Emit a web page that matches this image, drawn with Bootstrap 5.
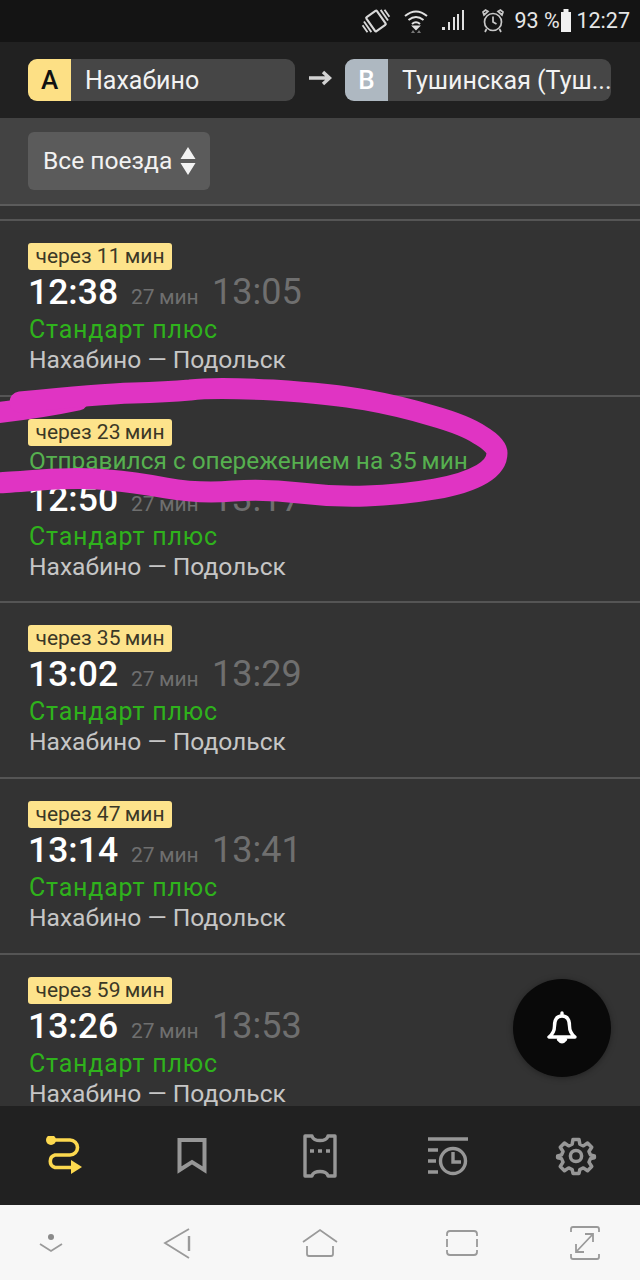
<!DOCTYPE html>
<html lang="ru"><head><meta charset="utf-8"><title>Расписание</title>
<link href="https://cdn.jsdelivr.net/npm/bootstrap@5.3.0/dist/css/bootstrap.min.css" rel="stylesheet">
<style>
html,body{height:100%;margin:0}
body{font-family:Roboto,"Noto Sans",sans-serif;background:#333;width:640px;height:1280px;overflow:hidden;position:relative}
.phone-status{height:42px;background:#141414;color:#e6e6e6;font-size:21.5px;padding-right:10px;flex:none}
.phone-status svg{display:block}
.route-head{height:76px;background:#212121;flex:none;padding:17px 29px 17px 28px}
.stop{height:42px;background:#464646;border-radius:9px;overflow:hidden;color:#f2f2f2;font-size:25px;line-height:44px;min-width:0}
.stop-a{width:267px}.stop-b{width:266px}
.stop-letter{width:43px;height:42px;flex:none;font-size:26px;font-weight:500;line-height:42px;text-align:center}
.letter-a{background:#fde085;color:#111}.letter-b{background:#aeb8c1;color:#fff}
.stop-name{padding-left:14px;white-space:nowrap;overflow:hidden}
.go-arrow{width:50px;flex:none;margin-top:-4px}
.filter-bar{height:88px;background:#434343;border-bottom:2px solid #5c5c5c;padding:14px 28px 0;flex:none}
.filter-btn{width:182px;height:58px;background:#5b5b5b;border-radius:6px;color:#f2f2f2;font-size:24.6px;padding:0 14px 0 15px}
.train-list{flex:1 1 auto;min-height:0;overflow:hidden;position:relative;background:#333}
.spacer-top{height:15px;border-bottom:2px solid #555}
.train{border-bottom:2px solid #555;padding:22px 0 0 29px;height:176px}
.train-late{height:206px}
.wait-tag{display:block;width:144px;height:27px;margin-left:-1px;background:#fde38b;color:#3b3826;border-radius:3px;font-size:21px;line-height:26px;text-align:center;white-space:nowrap}
.delay-line{height:30px;line-height:28px;margin-top:1px;color:#56b04f;font-size:24.4px;white-space:nowrap}
.time-row{height:45px;line-height:44px;white-space:nowrap;margin-left:-1px}
.t-dep{font-size:35.500px;font-weight:500;color:#fff;display:inline-block;width:103px}
.t-dur{font-size:21px;color:#6f6f6f;display:inline-block;width:81px;margin-top:3px}
.t-arr{font-size:36px;color:#6f6f6f}
.train-kind{height:30px;line-height:30px;font-size:25px;color:#2fb21c;letter-spacing:.8px}
.train-way{height:30px;line-height:30px;font-size:24.6px;color:#c6c6c6}
.fab-bell{position:absolute;left:513px;top:773px;width:98px;height:98px;border-radius:50%;background:#090909;box-shadow:0 1px 6px rgba(0,0,0,.35)}
.app-nav{height:99px;background:#212121;flex:none}
.app-nav>div{width:128px}
.phone-bar{height:75px;background:#f7f7f7;flex:none;display:grid;grid-template-columns:102px 152px 132px 152px 94px}
.phone-bar>div{display:flex;justify-content:center;align-items:center}
.scribble{position:absolute;left:0;top:0;pointer-events:none}
.st-wifi{margin-left:12px;margin-right:12px}
.st-pct{margin-left:9px;width:46px}
</style></head>
<body class="d-flex flex-column">
<div class="phone-status d-flex align-items-center justify-content-end">
 <svg width="30" height="30" viewBox="0 0 28 28" fill="none" stroke="#d8d8d8" stroke-width="2"><g transform="rotate(-35 14 14)"><rect x="8" y="6" width="12" height="16" rx="1"/><path d="M4.500 8V20M1.500 10V18M23.500 8V20M26.500 10V18" stroke-width="1.700"/></g></svg>
 <svg class="st-wifi" width="26" height="26" viewBox="0 0 26 26" fill="none" stroke="#e0e0e0" stroke-width="2"><path d="M2 8Q13-1 24 8M5.500 12Q13 6 20.500 12M9 16Q13 12.500 17 16"/><path d="M10.500 18.500 13 21 15.500 18.500Z" fill="#e0e0e0"/><path d="M8 25 10 22 12 25ZM14 25 16 22 18 25Z" fill="#777" stroke="none"/></svg>
 <svg width="24" height="24" viewBox="0 0 24 24" fill="#e0e0e0"><rect x="1" y="18" width="3" height="3"/><rect x="7" y="13" width="2" height="8"/><rect x="12" y="8" width="2" height="13"/><rect x="16" y="5" width="2" height="16"/><rect x="21" y="1" width="2" height="20"/></svg>
 <svg class="ms-3" width="24" height="26" viewBox="0 0 24 26" fill="none" stroke="#c8c8c8" stroke-width="1.700"><circle cx="12" cy="14" r="8.500"/><path d="M12 8.500V14L15.500 16M3 7 7 3.500 4.500 2 2 4ZM21 7 17 3.500 19.500 2 22 4ZM5.500 21 4 24M18.500 21 20 24"/></svg>
 <span class="st-pct">93 %</span>
 <svg width="12" height="26" viewBox="0 0 12 26" fill="#f0f0f0"><rect x="3.500" y="1" width="5" height="3"/><rect x="1" y="4" width="10" height="20"/></svg>
 <span class="ms-1">12:27</span>
</div>

<div class="route-head d-flex align-items-center">
 <div class="stop stop-a d-flex"><div class="stop-letter letter-a">A</div><div class="stop-name">Нахабино</div></div>
 <div class="go-arrow d-flex justify-content-center"><svg width="24" height="16" viewBox="0 0 24 16" fill="none" stroke="#d2d2d2" stroke-width="3.400"><path d="M1 8H21M15 2 21.500 8 15 14"/></svg></div>
 <div class="stop stop-b d-flex"><div class="stop-letter letter-b">B</div><div class="stop-name">Тушинская (Туш...</div></div>
</div>

<div class="filter-bar">
 <div class="filter-btn d-flex align-items-center justify-content-between"><span>Все поезда</span><svg width="16" height="30" viewBox="0 0 16 30" fill="#f2f2f2"><path d="M8 1 15.500 13H.5ZM8 29 15.500 17H.5Z"/></svg></div>
</div>

<main class="train-list">
 <div class="spacer-top"></div>
 <div class="train">
  <span class="wait-tag">через 11&#8201;мин</span>
  <div class="time-row"><span class="t-dep">12:38</span><span class="t-dur">27&#8201;мин</span><span class="t-arr">13:05</span></div>
  <div class="train-kind">Стандарт плюс</div><div class="train-way">Нахабино — Подольск</div>
 </div>
 <div class="train train-late">
  <span class="wait-tag">через 23&#8201;мин</span>
  <div class="delay-line">Отправился с опережением на 35&#8201;мин</div>
  <div class="time-row"><span class="t-dep">12:50</span><span class="t-dur">27&#8201;мин</span><span class="t-arr">13:17</span></div>
  <div class="train-kind">Стандарт плюс</div><div class="train-way">Нахабино — Подольск</div>
 </div>
 <div class="train">
  <span class="wait-tag">через 35&#8201;мин</span>
  <div class="time-row"><span class="t-dep">13:02</span><span class="t-dur">27&#8201;мин</span><span class="t-arr">13:29</span></div>
  <div class="train-kind">Стандарт плюс</div><div class="train-way">Нахабино — Подольск</div>
 </div>
 <div class="train">
  <span class="wait-tag">через 47&#8201;мин</span>
  <div class="time-row"><span class="t-dep">13:14</span><span class="t-dur">27&#8201;мин</span><span class="t-arr">13:41</span></div>
  <div class="train-kind">Стандарт плюс</div><div class="train-way">Нахабино — Подольск</div>
 </div>
 <div class="train">
  <span class="wait-tag">через 59&#8201;мин</span>
  <div class="time-row"><span class="t-dep">13:26</span><span class="t-dur">27&#8201;мин</span><span class="t-arr">13:53</span></div>
  <div class="train-kind">Стандарт плюс</div><div class="train-way">Нахабино — Подольск</div>
 </div>
 <div class="fab-bell d-flex align-items-center justify-content-center">
  <svg width="30" height="34" viewBox="0 0 30 34" fill="none" stroke="#fff" stroke-width="3.400" stroke-linejoin="round" stroke-linecap="round"><path d="M15 5C9 5 7.500 10 7.500 15 7.500 20 6 23 2 26H28C24 23 22.500 20 22.500 15 22.500 10 21 5 15 5ZM15 2V5"/><path d="M11.500 28.500Q15 33 18.500 28.500Z" fill="#fff"/></svg>
 </div>
</main>

<nav class="app-nav d-flex align-items-center">
 <div class="d-flex justify-content-center"><svg width="40" height="40" viewBox="0 0 40 40" fill="none" stroke="#fdd94f" stroke-width="3.600"><circle cx="7" cy="4" r="5" fill="#fdd94f" stroke="none"/><path d="M7 4H26A7.500 7.500 0 0 1 26 19H11A6.500 6.500 0 0 0 11 31.500H30"/><path d="M27 24 38 31 27 38Z" fill="#fdd94f" stroke="none"/></svg></div>
 <div class="d-flex justify-content-center"><svg width="30" height="38" viewBox="0 0 30 38" fill="none" stroke="#979797" stroke-width="4"><path d="M2.500 3H27.500V33L15 25 2.500 33Z"/></svg></div>
 <div class="d-flex justify-content-center"><svg width="34" height="44" viewBox="0 0 34 44" fill="none" stroke="#979797" stroke-width="3.400" stroke-linejoin="round"><path d="M2 2H9C10 8 24 8 25 2H32V42H25C24 36 10 36 9 42H2Z"/><path d="M7 17H11M15 17H19M23 17H27" stroke-width="3.400"/></svg></div>
 <div class="d-flex justify-content-center"><svg width="42" height="40" viewBox="0 0 42 40" fill="none" stroke="#979797" stroke-width="3.400"><path d="M1 3H41M1 14H11M1 25H9M1 36H11"/><circle cx="26" cy="25" r="12.500"/><path d="M26 16V26H34"/></svg></div>
 <div class="d-flex justify-content-center"><svg width="42" height="42" viewBox="0 0 24 24" fill="none" stroke="#979797" stroke-width="2" stroke-linejoin="round"><circle cx="12" cy="12" r="3.200"/><path d="M10.300 2.500H13.700L14.200 5.300 16.200 6.200 18.600 4.600 21 7 19.400 9.400 20.300 11.400 22.500 12 22.500 13 20.300 13.500 19.400 15.500 21 18 18.600 20.400 16.200 18.800 14.200 19.700 13.700 22H10.300L9.800 19.700 7.800 18.800 5.400 20.400 3 18 4.600 15.500 3.700 13.500 1.500 13V12L3.700 11.400 4.600 9.400 3 7 5.400 4.600 7.800 6.200 9.800 5.300Z"/></svg></div>
</nav>

<div class="phone-bar">
 <div><svg width="26" height="20" viewBox="0 0 26 20" fill="none" stroke="#9a9a9a" stroke-width="1.800"><circle cx="13" cy="4" r="3" fill="#8a8a8a" stroke="none"/><path d="M2 11 13 18 24 11"/></svg></div>
 <div><svg width="30" height="32" viewBox="0 0 30 32" fill="none" stroke="#9a9a9a" stroke-width="1.800"><path d="M26 2 2 16 26 31"/><path d="M26 9V24" stroke-width="2.400"/></svg></div>
 <div><svg width="36" height="30" viewBox="0 0 36 30" fill="none" stroke="#9a9a9a" stroke-width="1.800"><path d="M1 14 18 2 35 14M5 18V26Q5 28 7 28H29Q31 28 31 26V18"/></svg></div>
 <div><svg width="32" height="26" viewBox="0 0 32 26" fill="none" stroke="#9a9a9a" stroke-width="1.800"><path d="M1 6V4Q1 1 4 1H28Q31 1 31 4V6M1 20V22Q1 25 4 25H28Q31 25 31 22V20M1 9V17M31 9V17"/></svg></div>
 <div><svg width="30" height="34" viewBox="0 0 30 34" fill="none" stroke="#9a9a9a" stroke-width="1.800"><path d="M1 6V3Q1 1 3 1H27Q29 1 29 3V6M1 28V31Q1 33 3 33H27Q29 33 29 31V28"/><path d="M6 26 23 8M15 8H23V16M6 18V26H14"/></svg></div>
</div>

<svg class="scribble" width="640" height="1280" fill="none" stroke="#e034c3" stroke-width="21" stroke-linecap="round" stroke-linejoin="round">
 <path d="M-5 413Q40 408 78 400"/>
 <path d="M20 402Q100 394 133 393Q167 392 190 390Q213 387 273 390Q333 394 366 400Q400 406 433 416Q465 425 480 435Q497 445 497 453Q497 465 482 474Q465 484 435 489Q400 495 366 496Q333 497 300 493Q267 489 233 491Q200 494 166 488Q133 482 108 480Q83 477 40 480Q0 483-5 483"/>
</svg>
<script src="https://cdn.jsdelivr.net/npm/bootstrap@5.3.0/dist/js/bootstrap.bundle.min.js"></script>
</body></html>
